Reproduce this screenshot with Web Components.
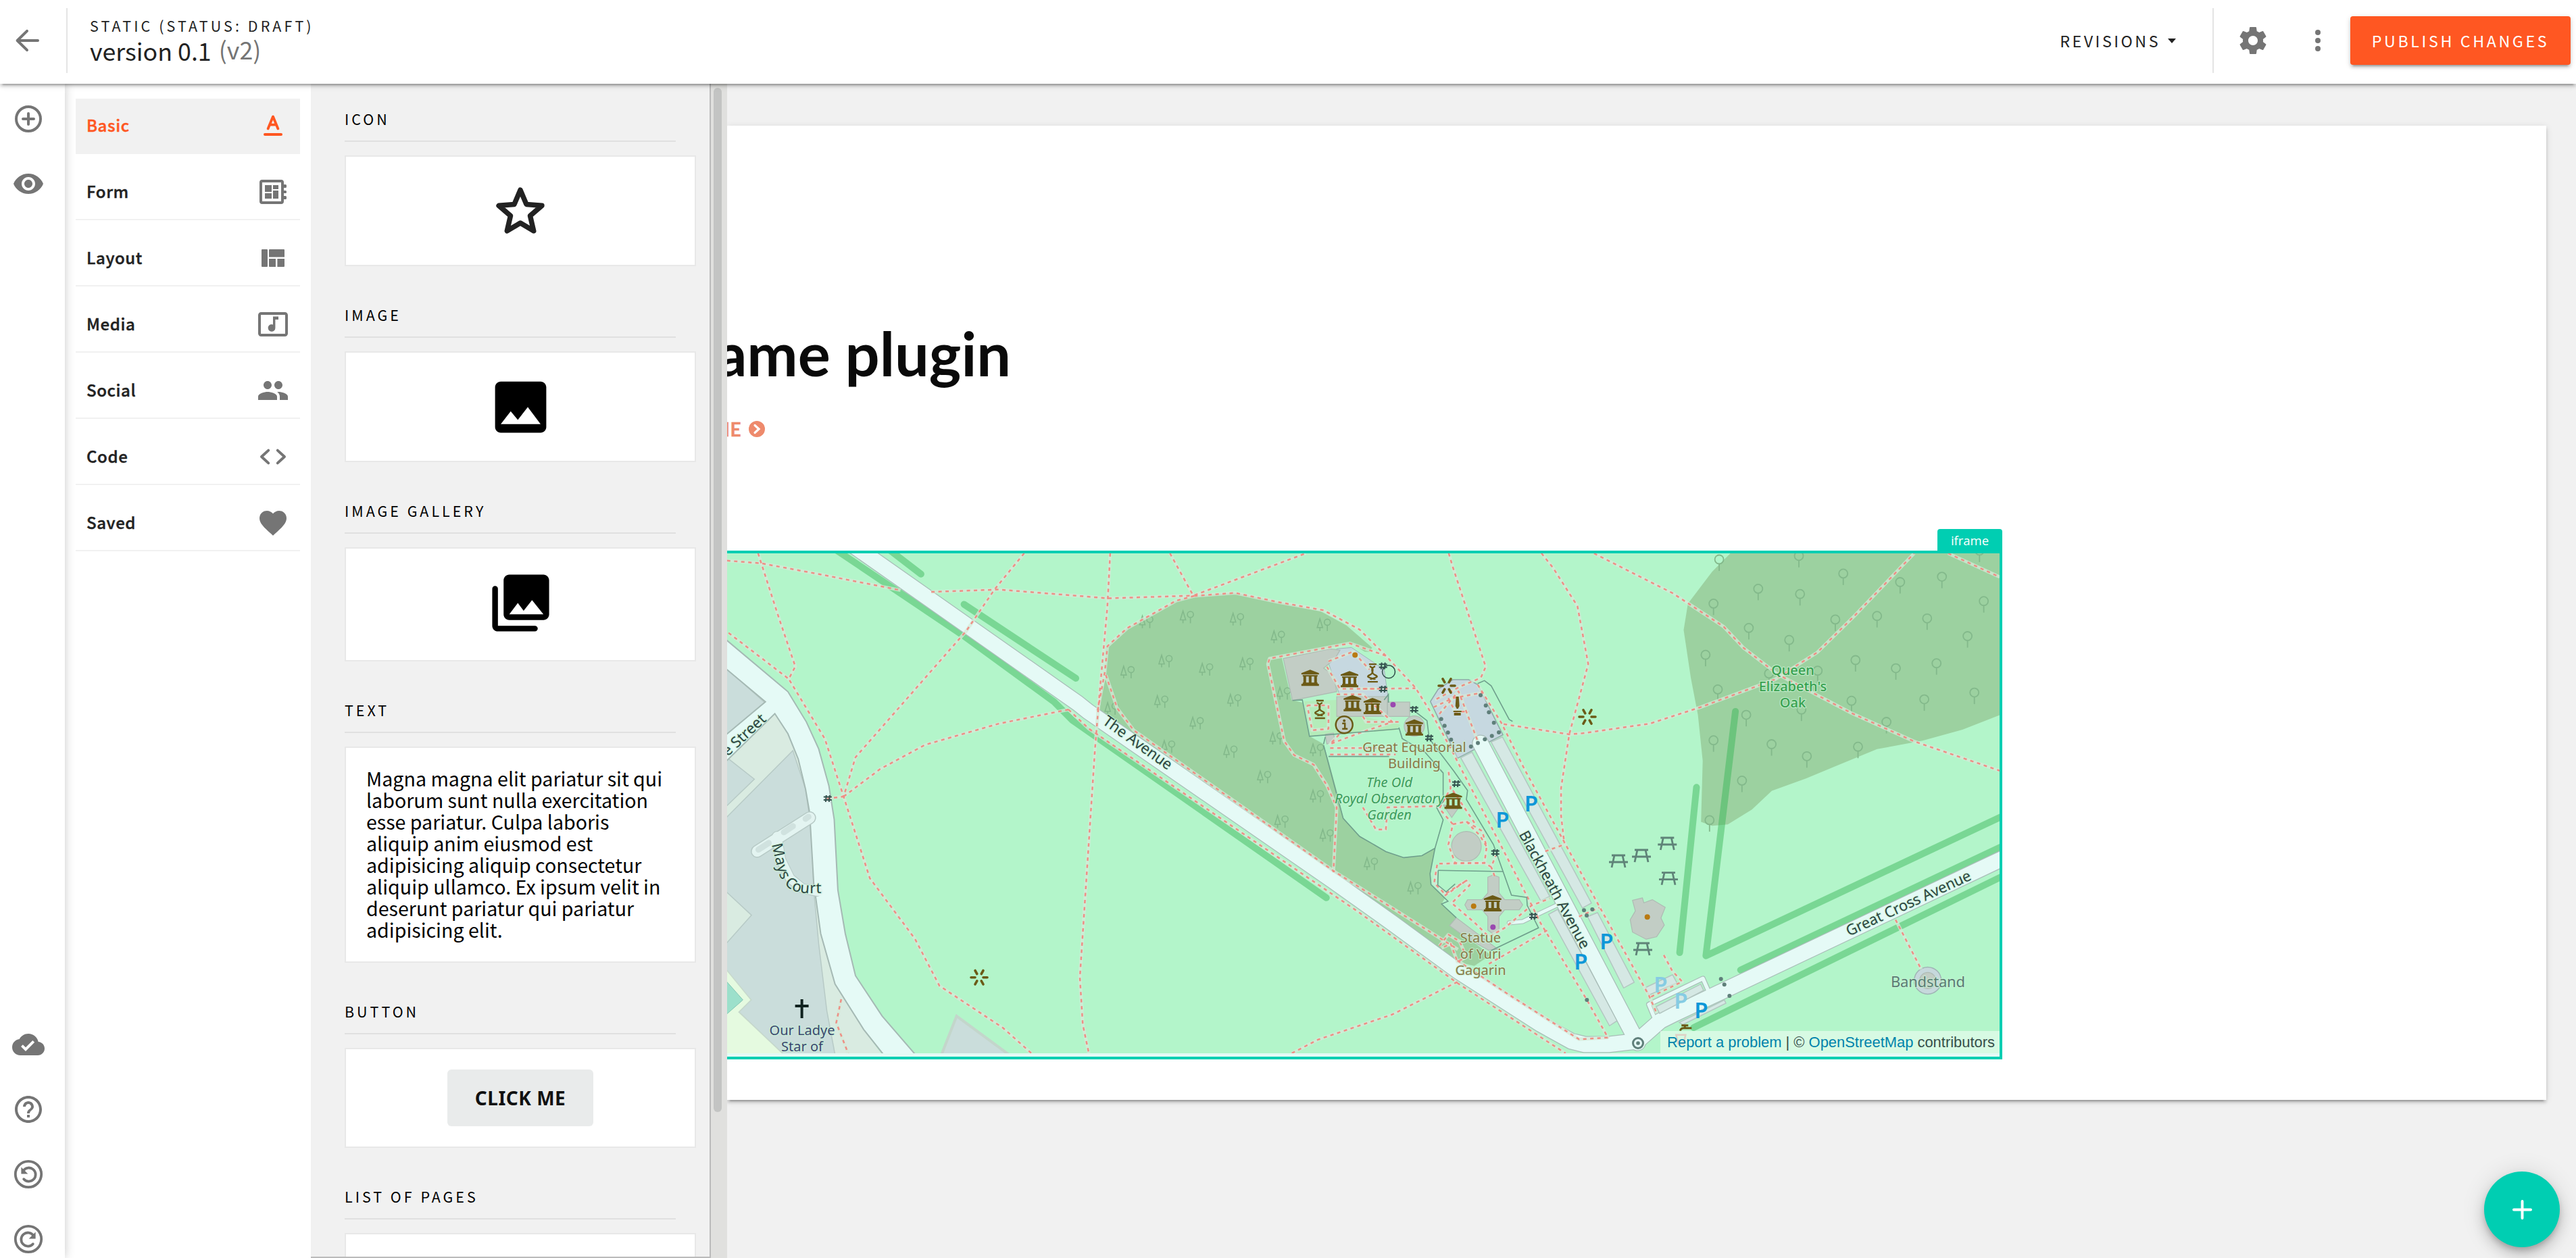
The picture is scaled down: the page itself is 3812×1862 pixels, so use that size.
<!DOCTYPE html>
<html lang="en">
<head>
<meta charset="utf-8">
<title>Page editor</title>
<style>
html,body{margin:0;padding:0;height:100%;overflow:hidden}
body{font-family:"Noto Sans CJK SC","Noto Sans",sans-serif;color:#222;background:#f1f1f1;
--accent:#ff5722;--teal:#00ceb2;--grey:#757575;
--lift:0 6px 2px -4px rgba(0,0,0,.2),0 4px 4px rgba(0,0,0,.14),0 2px 10px rgba(0,0,0,.12)}
</style>
</head>
<body>
<page-editor></page-editor>
<script>
const define=(name,html,init)=>{
  const t=document.createElement('template');t.innerHTML=html;
  customElements.define(name,class extends HTMLElement{
    constructor(){super();this.attachShadow({mode:'open'}).append(t.content.cloneNode(true));}
    connectedCallback(){if(init&&!this.ready){this.ready=true;init(this,this.shadowRoot);}}
  });
};

const ICONS={
  back:'<path d="M20 12H5M12 4.900 4.800 12l7.200 7.100" fill="none" stroke="currentColor" stroke-width="2" stroke-linecap="round" stroke-linejoin="round"/>',
  gear:'<path d="M19.430 12.980c.040-.32.070-.64.070-.98s-.030-.66-.070-.98l2.110-1.650c.190-.15.240-.42.120-.64l-2-3.460c-.12-.22-.39-.3-.61-.22l-2.490 1c-.52-.4-1.080-.73-1.690-.98l-.38-2.650C14.460 2.180 14.250 2 14 2h-4c-.25 0-.46.180-.49.420l-.38 2.650c-.61.250-1.170.590-1.690.980l-2.490-1c-.23-.09-.49 0-.61.220l-2 3.460c-.13.220-.07.490.120.640l2.110 1.650c-.04.320-.07.650-.07.980s.030.660.070.980l-2.110 1.650c-.19.150-.24.420-.12.640l2 3.460c.120.220.390.300.610.220l2.490-1c.520.400 1.080.730 1.690.980l.380 2.650c.030.240.240.420.490.420h4c.250 0 .460-.18.490-.42l.380-2.650c.610-.25 1.170-.59 1.690-.98l2.490 1c.230.090.490 0 .610-.22l2-3.460c.120-.22.070-.49-.12-.64l-2.110-1.650zM12 15.500c-1.930 0-3.500-1.570-3.500-3.500s1.570-3.500 3.500-3.500 3.500 1.570 3.500 3.500-1.570 3.500-3.500 3.500z"/>',
  more:'<circle cx="12" cy="6" r="2"/><circle cx="12" cy="12" r="2"/><circle cx="12" cy="18" r="2"/>',
  addCircle:'<g fill="none" stroke="currentColor" stroke-width="2" stroke-linecap="round"><circle cx="12" cy="12" r="9"/><path d="M12 8v8M8 12h8"/></g>',
  eye:'<path d="M12 4.500C7 4.500 2.730 7.610 1 12c1.730 4.390 6 7.500 11 7.500s9.270-3.110 11-7.500c-1.730-4.390-6-7.500-11-7.500zM12 17c-2.760 0-5-2.240-5-5s2.240-5 5-5 5 2.240 5 5-2.240 5-5 5zm0-8c-1.660 0-3 1.340-3 3s1.340 3 3 3 3-1.340 3-3-1.340-3-3-3z"/>',
  cloud:'<path d="M19.350 10.040C18.670 6.590 15.640 4 12 4 9.110 4 6.600 5.640 5.350 8.040 2.340 8.360 0 10.910 0 14c0 3.310 2.690 6 6 6h13c2.760 0 5-2.240 5-5 0-2.640-2.050-4.780-4.650-4.960zM10 17l-3.500-3.500 1.410-1.410L10 14.170 15.180 9l1.410 1.410L10 17z"/>',
  help:'<path d="M11 18h2v-2h-2v2zm1-16C6.480 2 2 6.480 2 12s4.480 10 10 10 10-4.480 10-10S17.520 2 12 2zm0 18c-4.410 0-8-3.590-8-8s3.590-8 8-8 8 3.590 8 8-3.590 8-8 8zm0-14c-2.210 0-4 1.790-4 4h2c0-1.100.9-2 2-2s2 .9 2 2c0 2-3 1.750-3 5h2c0-2.250 3-2.500 3-5 0-2.210-1.790-4-4-4z"/>',
  undo:'<g fill="none" stroke="currentColor" stroke-width="1.900" stroke-linecap="round"><circle cx="12" cy="12" r="9.600"/><path d="M8.300 9.300a5 5 0 1 1 .3 6.300"/></g><path d="M6.700 6.800v5h5z"/>',
  redo:'<g fill="none" stroke="currentColor" stroke-width="1.900" stroke-linecap="round"><circle cx="12" cy="12" r="9.600"/><path d="M15.700 9.300a5 5 0 1 0-.3 6.300"/></g><path d="M17.300 6.800v5h-5z"/>',
  textColor:'<path d="M6 17.500h12a1 1 0 0 1 1 1v0a1 1 0 0 1-1 1H6a1 1 0 0 1-1-1v0a1 1 0 0 1 1-1z"/><path d="M8.300 14.200 12 5.300l3.700 8.900M9.600 11.300h4.800" fill="none" stroke="currentColor" stroke-width="1.900" stroke-linecap="round" stroke-linejoin="round"/>',
  form:'<path fill-rule="evenodd" d="M4 3h14a2 2 0 0 1 2 2v1.500h1.200a.8.8 0 0 1 .8.8v.9a.8.8 0 0 1-.8.8H20v2h1.200a.8.8 0 0 1 .8.8v.4a.8.8 0 0 1-.8.8H20v2h1.200a.8.8 0 0 1 .8.8v.9a.8.8 0 0 1-.8.8H20V19a2 2 0 0 1-2 2H4a2 2 0 0 1-2-2V5a2 2 0 0 1 2-2zm0 2v14h14V5z"/><path d="M6 7h5v5H6zM12 7h4v3h-4zM6 13h5v4H6zM12 11h4v6h-4z"/>',
  layout:'<path d="M4 5.500h3.500a.5.500 0 0 1 .5.500v12a.5.500 0 0 1-.5.500H4a.5.500 0 0 1-.5-.5V6a.5.500 0 0 1 .5-.5zM9.500 5.500H20a.5.500 0 0 1 .5.500v5.200h-11.500V6a.5.500 0 0 1 .5-.5zM9 12.500h5v6H9.500a.5.500 0 0 1-.5-.5zM15.200 12.500h5.300V18a.5.500 0 0 1-.5.500h-4.800z"/>',
  media:'<rect x="2" y="4" width="20" height="16" rx="1.200" fill="none" stroke="currentColor" stroke-width="2"/><path d="M12 6.200h4v2.300h-2.300v6.200a2.700 2.700 0 1 1-1.700-2.500z"/>',
  people:'<path d="M16 11c1.660 0 2.990-1.340 2.990-3S17.660 5 16 5s-3 1.340-3 3 1.340 3 3 3zm-8 0c1.660 0 2.990-1.340 2.990-3S9.660 5 8 5 5 6.340 5 8s1.340 3 3 3zm0 2c-2.330 0-7 1.170-7 3.500V19h14v-2.500c0-2.330-4.670-3.500-7-3.500zm8 0c-.29 0-.62.020-.97.050 1.160.84 1.970 1.970 1.970 3.450V19h6v-2.500c0-2.330-4.670-3.500-7-3.500z"/>',
  code:'<path d="M8.600 7.300 3.500 12l5.100 4.700M15.400 7.300 20.500 12l-5.100 4.700" fill="none" stroke="currentColor" stroke-width="2" stroke-linecap="round" stroke-linejoin="round"/>',
  heart:'<path d="M12 21.350l-1.450-1.320C5.400 15.360 2 12.280 2 8.500 2 5.420 4.420 3 7.500 3c1.740 0 3.410.810 4.500 2.090C13.090 3.810 14.760 3 16.500 3 19.580 3 22 5.420 22 8.500c0 3.780-3.400 6.860-8.550 11.540L12 21.350z"/>',
  star:'<path d="M12 3.700 14.500 9.600l6.400.55-4.850 4.200 1.450 6.250L12 17.300l-5.500 3.300 1.450-6.250-4.850-4.200 6.400-.55z" fill="none" stroke="currentColor" stroke-width="2.100" stroke-linejoin="round"/>',
  image:'<path d="M21 19V5c0-1.100-.9-2-2-2H5c-1.100 0-2 .9-2 2v14c0 1.100.9 2 2 2h14c1.100 0 2-.9 2-2zM8.500 13.500l2.500 3.010L14.500 12l4.500 6H5l3.500-4.500z"/>',
  gallery:'<path d="M22 16V4c0-1.100-.9-2-2-2H8c-1.100 0-2 .9-2 2v12c0 1.100.9 2 2 2h12c1.100 0 2-.9 2-2zm-11-4l2.030 2.710L16 11l4 5H8l3-4zM4 7a1 1 0 0 0-2 0v13c0 1.100.9 2 2 2h13a1 1 0 0 0 0-2H4z"/>',
  plus:'<path d="M12 5v14M5 12h14" fill="none" stroke="currentColor" stroke-width="2.200" stroke-linecap="round"/>',
  next:'<circle cx="12" cy="12" r="12"/><path d="m9 6.500 6 5.500-6 5.500" fill="none" stroke="#fff" stroke-width="3.200" stroke-linecap="round"/>'
};
define('ui-icon','<style>:host{display:block;flex:none}svg{display:block;fill:currentColor}</style>',(h,r)=>{
  const s=h.getAttribute('size')||48;
  r.innerHTML+=`<svg width="${s}" height="${s}" viewBox="0 0 24 24">${ICONS[h.getAttribute('name')]}</svg>`;
});

define('top-bar',`<style>
:host{display:flex;align-items:center;height:124px;background:#fff;box-shadow:var(--lift);position:relative;z-index:3}
ui-icon{color:var(--grey)}
.row{display:flex;align-items:center;height:120px;width:100%;margin-bottom:4px}
.back{padding:0 34px 0 16px}
.rule{width:2px;height:96px;background:#e4e4e4}
.titles{flex:1;padding-left:33px;align-self:flex-start;padding-top:24px}
.kind{font-size:21.450px;line-height:28px;letter-spacing:4.100px}
.name{font-size:35.750px;line-height:44px;margin-top:1px}
.name small{font-size:35.750px;color:var(--grey);margin-left:3px;position:relative;top:-2px}
.rev{font-size:23.250px;letter-spacing:3.500px;display:flex;align-items:center;gap:11px;padding-right:54px;line-height:34px}
.rev i{border:6px solid transparent;border-top:7px solid #222;border-bottom:0}
.gear{margin-left:34px}.more{margin-left:48px}
.pub{margin-left:24px;margin-right:8px;width:326px;height:72px;border-radius:4px;background:var(--accent);color:#fff;font-size:23.250px;letter-spacing:3.600px;display:flex;align-items:center;justify-content:center;box-shadow:var(--lift)}
</style><div class="row"><ui-icon class="back" name="back"></ui-icon><span class="rule"></span>
<div class="titles"><div class="kind">STATIC (STATUS: DRAFT)</div><div class="name">version 0.1 <small>(v2)</small></div></div>
<div class="rev"><span>REVISIONS</span><i></i></div><span class="rule"></span>
<ui-icon class="gear" name="gear"></ui-icon><ui-icon class="more" name="more"></ui-icon><div class="pub">PUBLISH CHANGES</div></div>`);

define('tool-rail',`<style>
:host{display:flex;flex-direction:column;justify-content:space-between;width:96px;padding:28px 0 4px;box-sizing:border-box;background:#fff;color:var(--grey);box-shadow:0 0 14px rgba(0,0,0,.22);position:relative;z-index:1}
div{display:flex;flex-direction:column;gap:48px;padding-left:18px}
div:first-child{gap:47px}
</style><div><ui-icon name="addCircle"></ui-icon><ui-icon name="eye"></ui-icon></div>
<div><ui-icon name="cloud"></ui-icon><ui-icon name="help"></ui-icon><ui-icon name="undo"></ui-icon><ui-icon name="redo"></ui-icon></div>`);

define('category-item',`<style>
:host{display:flex;align-items:center;justify-content:space-between;height:80px;padding:0 16px;border-bottom:2px solid #f1f1f1;font-size:24px;font-weight:500;letter-spacing:.6px;-webkit-text-stroke:.45px;line-height:32px;color:#222}
:host([active]){background:#f1f1f1;color:var(--accent)}
ui-icon{color:var(--grey)}:host([active]) ui-icon{color:inherit}
span{padding-bottom:2px}
</style><span><slot></slot></span>`,(h,r)=>{const i=document.createElement('ui-icon');i.setAttribute('name',h.getAttribute('icon'));r.append(i);});

define('category-list',`<style>:host{display:flex;flex-direction:column;gap:16px;width:332px;padding:22px 16px 0;background:#fff}</style>
<category-item active icon="textColor">Basic</category-item><category-item icon="form">Form</category-item>
<category-item icon="layout">Layout</category-item><category-item icon="media">Media</category-item>
<category-item icon="people">Social</category-item><category-item icon="code">Code</category-item>
<category-item icon="heart">Saved</category-item>`);

define('widget-card',`<style>
:host{display:block;color:#000}
h4{margin:0 30px 20px 0;font-weight:400;font-size:21.450px;line-height:31px;letter-spacing:4px;padding-bottom:17px;border-bottom:2px solid #e0e0e0}
.box{display:flex;align-items:center;justify-content:center;box-sizing:border-box;background:#fff;border:2px solid #e8e8e8;height:var(--h,164px);padding-bottom:var(--lower,0)}
</style><h4></h4><div class="box"><slot></slot></div>`,(h,r)=>{r.querySelector('h4').textContent=h.getAttribute('label');});

define('widget-panel',`<style>
:host{display:flex;width:616px;background:#f1f1f1;overflow:hidden}
.list{display:flex;flex-direction:column;gap:56px;box-sizing:border-box;width:592px;padding:36px 20px 0 50px;border-right:2px solid #bbb;border-bottom:2px solid #bbb;overflow:hidden}
.list>*{flex:none}
.bar{width:24px;background:#e0e0de;display:flex;justify-content:flex-start}
.bar i{width:12px;height:1516px;margin:6px 0 0 4px;border-radius:6px;background:#c3c4c3}
p{margin:0;padding:0 30px;width:456px;font-size:28.600px;line-height:32px;white-space:nowrap}
b{display:flex;align-items:center;justify-content:center;width:216px;height:84px;padding-bottom:1px;box-sizing:border-box;border-radius:6px;background:#e9ebeb;color:#111;font:700 28px "Noto Sans",sans-serif;letter-spacing:.5px}
ui-icon[name=star]{color:#222}
</style><div class="list">
<widget-card label="ICON" style="--lower:2px"><ui-icon name="star" size="86"></ui-icon></widget-card>
<widget-card label="IMAGE"><ui-icon name="image" size="101"></ui-icon></widget-card>
<widget-card label="IMAGE GALLERY" style="--h:169px;--lower:5px"><ui-icon name="gallery" size="101"></ui-icon></widget-card>
<widget-card label="TEXT" style="--h:320px;--lower:2px"><p>Magna magna elit pariatur sit qui<br>laborum sunt nulla exercitation<br>esse pariatur. Culpa laboris<br>aliquip anim eiusmod est<br>adipisicing aliquip consectetur<br>aliquip ullamco. Ex ipsum velit in<br>deserunt pariatur qui pariatur<br>adipisicing elit.</p></widget-card>
<widget-card label="BUTTON" style="--h:148px"><b>CLICK ME</b></widget-card>
<widget-card label="LIST OF PAGES"></widget-card></div><div class="bar"><i></i></div>`);

/* Map sheets: each has its origin on the page and its own grid units. */
const SHEET={W:[1060,800,1.6505,2.0103],O:[1600,840,2.0632,2.45],E:[2340,760,2.3758,1.9122],S:[2060,1140,3,3],N:[2040,920,3,3],G:[0,0,1,1]};
const pts=str=>{let k='G';const out=[];for(const tok of str.trim().split(/\s+/)){if(SHEET[tok]){k=tok;continue;}
  const [x,y]=tok.split(',').map(Number),s=SHEET[k];out.push([+(s[0]+x/s[2]).toFixed(1),+(s[1]+y/s[3]).toFixed(1)]);}return out;};
const P=str=>pts(str).map(p=>p.join()).join(' ');
const poly=(str,a)=>`<polygon points="${P(str)}" ${a}/>`;
const line=(str,a='')=>`<polyline points="${P(str)}" ${a}/>`;
const put=(str,f)=>pts(str).map(([x,y])=>f(x,y)).join('');
const sym=(id,str)=>put(str,(x,y)=>`<use href="#${id}" x="${x}" y="${y}"/>`);

const resid='fill="#cadddb" stroke="#b7cac6" stroke-width="1.500"',bld='fill="#c2cdc5" stroke="#aebbb3" stroke-width="1.200"',park='fill="#d5e8e4" stroke="#b3c6c1" stroke-width="1.500"';
const roads=['G 1262,807 1595,1041 1610,1053 1973,1304 2060,1366 2157,1437 2280,1516 2325,1541 2345,1546 2380,1546 2423,1541 2457,1511 2475,1502 2965,1270','N 452,540 S 1090,1210'];
const paths=[
'W 26,60 110,68 250,100 450,148','W 525,153 690,146 958,172 1165,164','W 102,38 150,220 193,375 177,412 265,590 311,762 375,1005 485,1185 545,1325 700,1450 770,1526',
'W 30,275 177,412','W 752,38 680,145 610,270 340,645 311,762','W 962,38 955,200 935,470 925,620 888,1300 895,1440 910,1526','W 311,762 400,680 510,608 690,545 860,503','W 270,768 311,762',
'W 1108,38 1165,164 1440,38','W 305,1365 293,1435 322,1526','S 290,940 0,1085 W 1470,1485 1405,1526','W 860,503 910,560 1568,1105 S 290,945 770,1257',
'O 75,390 110,510 160,590 770,1100 1150,1385','S 290,845 500,985 830,1195 960,1187',
'O 345,103 290,120 140,220 80,285 72,380 50,520','O 345,103 470,92 600,125 740,155 850,225 930,320 1020,435 1075,540 1130,660 S 310,0 450,270 620,600 660,680 865,1020 960,1190',
'O 930,320 820,275 575,330 570,350 620,630 650,680 710,715 750,790 780,870 770,1105',
'O 1122,-52 1135,0 1235,360 1220,400 1160,430 1080,480','O 1405,-52 1440,0 1515,140 1548,350 1490,605 1465,800 1465,900 1475,1000','O 1290,568 1490,605 E 5,622 240,595 420,548 680,470 830,393 960,290 1170,113',
'E 45,113 320,225 500,320 570,380 690,455 950,565 1170,645 1471,728','E 1290,113 1471,180','N 440,280 545,450 S 590,0 765,320 920,605 1140,1000 1175,1080','S 680,360 765,330','S 430,860 690,710',
'S 270,240 330,228 400,270 420,340 410,412 280,412 250,330 270,240 210,170 260,80 250,0','S 210,415 410,412 440,430 460,380','S 455,470 440,430','S 200,420 187,500 235,550 330,490 345,510 265,590 370,680 430,740 500,700 620,600 700,570',
'S 330,228 390,290 420,340','S 270,90 330,180 370,240','O 760,655 950,655','O 760,678 960,678','O 860,440 1020,438','O 860,870 900,950 930,950 935,870 1090,865','O 755,340 830,305 880,370','O 750,360 790,440 900,440','O 780,460 860,460 950,560 850,600 760,640 800,590','O 860,540 870,560 970,560','O 690,500 755,500 755,585 705,590 690,500',
'E 1105,1150 1195,1290','E 290,1250 320,1295 355,1325 240,1370','S 210,780 250,730 300,760 330,830 290,850 260,770 220,790','N 245,380 330,340 465,315','N 270,410 355,310 440,530','N 310,340 340,400 400,400','O 1110,1190 1170,1140 1180,1150','S 830,650 920,610'];
const fences=['O 740,645 800,910 850,975 930,1030 985,1052 1040,1045 1080,1018 1105,915 1085,870 1105,850 1105,745 1050,670 980,620 970,580','O 1080,1018 1065,1110 1068,1150 1120,1210 1100,1220 1145,1270','O 1250,1390 S 650,700 600,600 598,565 530,555 450,330 330,130 335,90 N 335,665 225,520 215,440 150,390','S 205,445 495,450','S 205,445 203,510 240,540 280,505','N 440,275 470,262 500,285 580,435 595,443','O 755,685 940,685','O 645,482 675,480 697,612 970,585','O 740,640 745,615','O 925,480 938,460 938,490'];
const label=(x,y,rows,c,a='')=>rows.map((t,i)=>`<text x="${x}" y="${y+i*24.200}" fill="${c}" ${a}>${t}</text>`).join('');

define('street-map',`<style>
:host{display:grid;height:740px;overflow:hidden;background:#b3f5ca}
:host>*{grid-area:1/1}
svg{display:block}
.credit{place-self:end;display:flex;align-items:center;height:33px;width:502px;box-sizing:border-box;justify-content:flex-end;padding-right:7px;background:rgba(255,255,255,.47);font:21.930px "Liberation Sans",Arial,sans-serif;color:#364f4a;white-space:pre;position:relative}
a{color:#0083ac}
</style>`,(h,r)=>{
r.innerHTML+=`<svg width="1883" height="740" viewBox="1076 819 1883 740" font-family="Noto Sans,sans-serif">
<defs>
<g id="mus" fill="#6b5a16"><path d="M-13-7 0-12 13-7v2h-26zM-13 9h26v3h-26zM-11-4h22v2h-22zM-11 7h22v2h-22zM-10-2h4V7h-4zM-2-2h4V7h-4zM6-2h4V7H6z"/></g>
<g id="pole" fill="none" stroke="#6b5a16" stroke-width="2.400"><path d="M-7 14H8M-5-12H6M-4-9C6-4-5 0 4 4S-3 9-3 11M4-9C-6-4 5 0-4 4S4 9 4 11"/></g>
<g id="mem" fill="#6b5a16"><path d="M-2-14h4L3 0 1 4h-2L-3 0zM-6 7H6v2H-6zM-5 10H5v4H-5z"/></g>
<g id="flower" fill="none" stroke="#6b5a16" stroke-width="3.600" stroke-linecap="round"><path d="M-12 0H-6M12 0H6M-6-10.200-3.200-5.200M6-10.200 3.200-5.200M-6 10.200-3.200 5.200M6 10.200 3.200 5.200"/></g>
<g id="gate" fill="none" stroke="#33514d" stroke-width="2"><path d="M-6-2.500H6M-6 2H6M-2-5-3 5M3-5 2 5"/></g>
<g id="picnic" fill="none" stroke="#5f8378" stroke-width="2.800"><path d="M-10-9H10M-14 1H14M-6-9-10 9M6-9 10 9"/></g>
<g id="pair" fill="none" stroke="#83b98b" stroke-width="1.600"><path d="M-6-9-10 4h8zM-6 4V9M5 1V9"/><circle cx="5" cy="-4" r="4.500"/></g>
<g id="tree" fill="none" stroke="#83b98b" stroke-width="1.800"><circle r="6.500"/><path d="M0 6.500V17"/></g>
</defs>
${poly('W 20,385 120,480 143,515 175,575 200,650 220,740 228,810 238,1020 255,1170 290,1320 360,1455 405,1530 20,1530','fill="#d9ebe1"')}
${poly('W 20,375 118,482 20,582',resid)}${poly('W 20,640 93,710 20,796',resid)}
${poly('W 187,625 218,740 232,860 238,1040 250,1200 270,1400 290,1530 165,1530 55,1403 85,1367 20,1280 20,1205 86,1115 20,1040 20,830',resid)}
${poly('W 20,1270 85,1367 55,1403 165,1530 20,1530','fill="#e5fae0" stroke="#c7d9cc" stroke-width="1.500"')}${poly('W 20,1305 65,1367 20,1415','fill="#9ce0cb" stroke="#82c6b4"')}
${poly('W 587,1415 550,1530 715,1530','fill="#cadddb" stroke="#c3d6cb" stroke-width="4"')}
${poly('O 290,120 345,103 470,92 600,125 730,158 810,210 888,290 880,306 865,305 825,275 612,325 642,480 675,490 697,612 740,640 755,700 780,810 800,910 850,975 930,1030 985,1052 1040,1045 1080,1018 1065,1110 1068,1150 1110,1200 1100,1220 1145,1270 1130,1300 1250,1405 1200,1445 1150,1430 770,1125 90,560 48,510 75,400 75,290 140,220','fill="#9cd1a0"')}
${poly('E 530,108 460,165 375,255 360,330 385,465 410,570 427,700 421,873 460,884 515,880 600,838 670,785 790,750 900,713 1040,667 1200,643 1340,612 1480,568 1480,108','fill="#9cd1a0"')}
${sym('pair','O 199,198 323,180 476,188 741,208 601,252 258,340 142,380 382,370 505,350 245,487 468,482 619,457 93,512 353,565 597,620 266,650 456,668 720,662 559,760 720,830 612,922 750,972 885,1075 1018,1163')}
${sym('tree','E 485,130 765,120 921,170 1121,194 1268,179 1400,105 465,255 622,213 769,228 893,300 1040,290 1216,297 1415,248 589,324 731,358 1358,347 437,400 964,415 1106,438 1249,424 660,453 831,445 480,498 950,530 1206,526 1382,507 580,570 774,555 1073,590 465,642 669,653 793,687 973,660 565,756 451,868')}
<g fill="none" stroke="#34b351" stroke-opacity=".45" stroke-width="10" stroke-linecap="round" stroke-linejoin="round">${line('W 285,22 600,280 825,480 870,535 1490,1063')}${line('W 425,30 500,100')}${line('W 605,190 878,410')}${line('E 542,560 438,1252 1480,857')}${line('E 405,775 346,1243')}${line('E 560,1292 1480,942')}${line('E 395,1455 1480,1027')}</g>
${poly('O 680,485 780,480 860,540 975,570 960,590 700,612','fill="#b4ecba"')}
${poly('O 780,295 825,290 925,370 938,480 790,465 770,400 755,345','fill="#c6d8e0" stroke="#a0b5b8"')}
${poly('N 230,355 265,300 330,258 400,258 440,280 552,503 350,607','fill="#c6d8e0" stroke="#8fa9a8" stroke-width="1.500"')}
${poly('O 617,330 760,295 790,300 775,330 740,365 770,390 780,450 645,482',bld)}${poly('O 780,468 935,468 935,540 780,540',bld)}${poly('O 935,488 1003,488 1003,540 935,540',bld)}${poly('O 745,605 770,600 775,630 750,640',bld)}
${put('O 1017,575',(x,y)=>`<circle cx="${x}" cy="${y}" r="15" ${bld}/>`)}${put('S 330,338',(x,y)=>`<circle cx="${x}" cy="${y}" r="22" ${bld}/>`)}
${poly('S 425,475 450,465 475,475 475,545 500,575 565,575 580,598 565,620 500,620 475,650 475,710 450,728 425,710 425,650 400,620 335,620 323,598 335,575 400,575 425,545',bld)}
${poly('S 285,655 255,690 330,745 430,800 470,795',bld)}${poly('S 228,155 300,160 265,210',bld)}
${poly('E 180,1095 215,1088 220,1102 250,1093 295,1115 280,1145 292,1165 265,1198 228,1205 180,1185 172,1150 190,1125',bld)}
${put('E 1218,1322',(x,y)=>`<circle cx="${x}" cy="${y}" r="20" fill="#c6d8dc" stroke="#9fb4b4" stroke-width="1.500"/><circle cx="${x}" cy="${y}" r="12" ${bld}/>`)}
${poly('N 365,605 415,580 S 700,560 660,580',park)}${poly('N 500,535 550,512 S 885,590 845,612',park)}${poly('S 695,640 735,618 1000,1112 965,1135',park)}${poly('S 868,650 912,632 1075,942 1028,967',park)}${poly('S 1125,965 1245,908 1265,945 1140,998',park)}
${poly('W 20,291 175,450 220,540 250,620 275,730 288,830 297,1040 315,1170 340,1295 405,1415 490,1535 412,1535 360,1455 290,1320 255,1170 238,1020 228,810 218,740 200,650 175,575 143,515 20,662 20,582 120,480 20,378','fill="#e5faf6" stroke="#a5b9b4" stroke-width="2"')}
<g fill="none" stroke-linecap="round" stroke-linejoin="round">
<g stroke="#b7cac6" stroke-width="19">${line('W 228,825 100,925')}<g stroke-width="15">${line('W 148,880 158,950 180,1005 210,1035 245,1045')}</g></g>
<g stroke="#e3f4f1" stroke-width="16">${line('W 228,825 100,925')}<g stroke-width="13">${line('W 148,880 158,950 180,1005 210,1035 250,1045')}</g></g>
<g stroke="#d0e2df" stroke-width="9">${line('W 225,822 218,828')}${line('W 187,850 165,868')}${line('W 128,900 103,920')}</g>
<g stroke="#a9bdb8">${line('S 1165,1100 1140,1040 1380,925 1402,975','stroke-width="8"')}${line('S 520,678 580,672 730,600','stroke-width="7"')}${roads.map(d=>line(d,'stroke-width="25"')).join('')}</g>
<g stroke="#e5faf6">${line('S 1165,1100 1140,1040 1380,925 1402,975','stroke-width="5.500"')}${line('S 520,678 580,672 730,600','stroke-width="5"')}${roads.map(d=>line(d,'stroke-width="22.500"')).join('')}</g></g>
${poly('S 1172,1050 1370,950 1383,978 1188,1080',park)}${poly('S 1275,1120 1475,1020 1482,1035 1290,1130',park)}
<g fill="none" stroke="#d6e9d8" stroke-opacity=".75" stroke-width="5" stroke-linejoin="round">${paths.map(d=>line(d)).join('')}</g>
<g fill="none" stroke="#ee8f85" stroke-width="2.500" stroke-dasharray="5 5.500" stroke-linejoin="round">${paths.map(d=>line(d)).join('')}</g>
<g fill="none" stroke="#6f9f8c" stroke-width="1.600">${fences.map(d=>line(d)).join('')}${put('N 45,223',(x,y)=>`<circle cx="${x}" cy="${y}" r="9.500" stroke="#33514d"/>`)}</g>
<g fill="#5f7f7a">${put('N 453,327 476,373 490,403 512,449 534,492 503,508 472,523 441,539 410,555 278,433 293,463 308,493 322,524 S 865,1020 852,622 864,645 889,618 1460,927 1475,952 1498,1002',(x,y)=>`<circle cx="${x}" cy="${y}" r="3"/>`)}</g>
${sym('gate','N 20,197 20,300 158,390 225,517 345,720 S 458,366 627,648 W 272,768')}
${sym('mus','O 699,400 819,405 828,492 889,502 1017,580 1136,846 1256,1218')}${sym('pole','O 889,380 728,512')}${sym('mem','N 350,375')}${sym('flower','N 303,285 927,423 W 642,1300')}${sym('picnic','S 1222,327 1107,381 1005,405 1227,482 1113,795')}
${put('O 803,570',(x,y)=>`<circle cx="${x}" cy="${y}" r="12.500" fill="#c2cdc5" stroke="#6b5a16" stroke-width="2.500"/><path d="M${x-3} ${y-2}h4v8m-4 0h8" fill="none" stroke="#6b5a16" stroke-width="2.500"/><circle cx="${x}" cy="${y-6}" r="2" fill="#6b5a16"/>`)}
<g fill="#b97a12">${put('O 836,317 S 362,604 1133,652',(x,y)=>`<circle cx="${x}" cy="${y}" r="4"/>`)}</g><g fill="#9a48b0">${put('O 952,497 S 448,697',(x,y)=>`<circle cx="${x}" cy="${y}" r="4"/>`)}</g>
${put('S 1092,1212',(x,y)=>`<circle cx="${x}" cy="${y}" r="7.500" fill="none" stroke="#5f7f7a" stroke-width="3"/><circle cx="${x}" cy="${y}" r="2.800" fill="#5f7f7a"/>`)}
${put('W 209,1393',(x,y)=>`<path d="M${x} ${y-14}v28M${x-10} ${y-4}h20" stroke="#10221f" stroke-width="4"/>`)}
${put('S 1300,1145',(x,y)=>`<path d="M${x-5} ${y-4}h10M${x} ${y-4}v5M${x-7} ${y+4}q1-4 5-4h12" fill="none" stroke="#6b5a16" stroke-width="3"/><path d="M${x-13} ${y+10}h14l-3 13h-8z" fill="none" stroke="#c2a692" stroke-width="2.500"/>`)}
<g font-size="33" font-weight="600" text-anchor="middle" fill="#0d97d8">${put('N 678,807 550,880 S 952,760 838,850 1372,1065',(x,y)=>`<text x="${x}" y="${y+12}">P</text>`)}<g fill="#86cce3">${put('S 1192,950 1282,1022',(x,y)=>`<text x="${x}" y="${y+12}">P</text>`)}</g></g>
<g font-size="20" text-anchor="middle" stroke="#c8f3d5" stroke-width="2.500" stroke-opacity=".7" paint-order="stroke" stroke-linejoin="round">
${label(2093,1113,['Great Equatorial','Building'],'#8a7846')}${label(2056,1165,['The Old','Royal Observatory','Garden'],'#3a9d5b','font-style="italic"')}${label(2191,1395,['Statue','of Yuri','Gagarin'],'#8a7846')}
${label(2653,999,["Queen","Elizabeth's",'Oak'],'#37a04f','font-weight="500"')}${label(1187,1532,['Our Ladye','Star of'],'#3b4670')}
<g font-size="22" fill="#5b7b74"><text x="2853" y="1461" textLength="110">Bandstand</text></g>
<g font-size="22" fill="#2c4441">
<text transform="translate(1681 1103) rotate(35.500)" y="3" textLength="120">The Avenue</text>
<text transform="translate(2300 1317) rotate(61.500)" y="7" textLength="195">Blackheath Avenue</text>
<text transform="translate(2826 1341) rotate(-24.800)" y="3" textLength="201">Great Cross Avenue</text>
<text transform="translate(1135 1066) rotate(-43)" text-anchor="end">e Street</text>
<path id="mays" d="M1142 1250L1150 1284Q1156 1308 1170 1316Q1180 1322 1198 1322L1245 1322" fill="none" stroke="none"/><text text-anchor="start"><textPath href="#mays" textLength="120">Mays Court</textPath></text></g></g>
</svg><div class="credit"><a>Report a problem</a> | © <a>OpenStreetMap</a> contributors</div>`;
});

define('iframe-block',`<style>
:host{display:flex;flex-direction:column;align-items:flex-end;width:1887px}
.tab{width:96px;height:32px;border-radius:4px 4px 0 0;background:var(--teal);color:#fff;font:18.500px/34px "Open Sans","Noto Sans",sans-serif;text-align:center}
.frame{width:1883px;border:4px solid var(--teal);border-left:0;background:#e5faf5;padding-bottom:5px}
</style><div class="tab">iframe</div><div class="frame"><street-map></street-map></div>`);

define('page-canvas',`<style>
:host{display:flex;flex-direction:column;flex:1;overflow:hidden;padding-top:62px;min-width:0}
.sheet{display:flex;flex-direction:column;height:1442px;margin-right:44px;background:#fff;box-shadow:var(--lift)}
h1{margin:281px 0 0;width:420px;display:flex;justify-content:flex-end;font:700 90px/110px Lato,sans-serif;color:#0a0a0a;white-space:nowrap}
.crumb{display:flex;align-items:center;justify-content:flex-end;gap:11px;width:56px;margin-top:43px;height:30px;color:#ee8a6c;font:700 28px/30px Lato,sans-serif;letter-spacing:.5px;-webkit-text-stroke:.4px;white-space:nowrap}
iframe-block{margin-top:133px}
</style><div class="sheet"><h1>Iframe plugin</h1><div class="crumb"><span>HOME</span><ui-icon name="next" size="24"></ui-icon></div><iframe-block></iframe-block></div>`);

define('page-editor',`<style>
:host{display:flex;flex-direction:column;width:3812px;height:1862px;position:relative;overflow:hidden}
main{display:flex;flex:1;min-height:0}
tool-rail,category-list,widget-panel{flex:none}
.fab{position:absolute;right:24px;bottom:16px;width:112px;height:112px;border-radius:50%;background:var(--teal);color:#fff;display:flex;align-items:center;justify-content:center;box-shadow:0 6px 10px -2px rgba(0,0,0,.2),0 12px 20px rgba(0,0,0,.14),0 2px 36px rgba(0,0,0,.12)}
</style><top-bar></top-bar><main><tool-rail></tool-rail><category-list></category-list><widget-panel></widget-panel><page-canvas></page-canvas></main>
<div class="fab"><ui-icon name="plus" size="43"></ui-icon></div>`);
</script>
</body>
</html>
